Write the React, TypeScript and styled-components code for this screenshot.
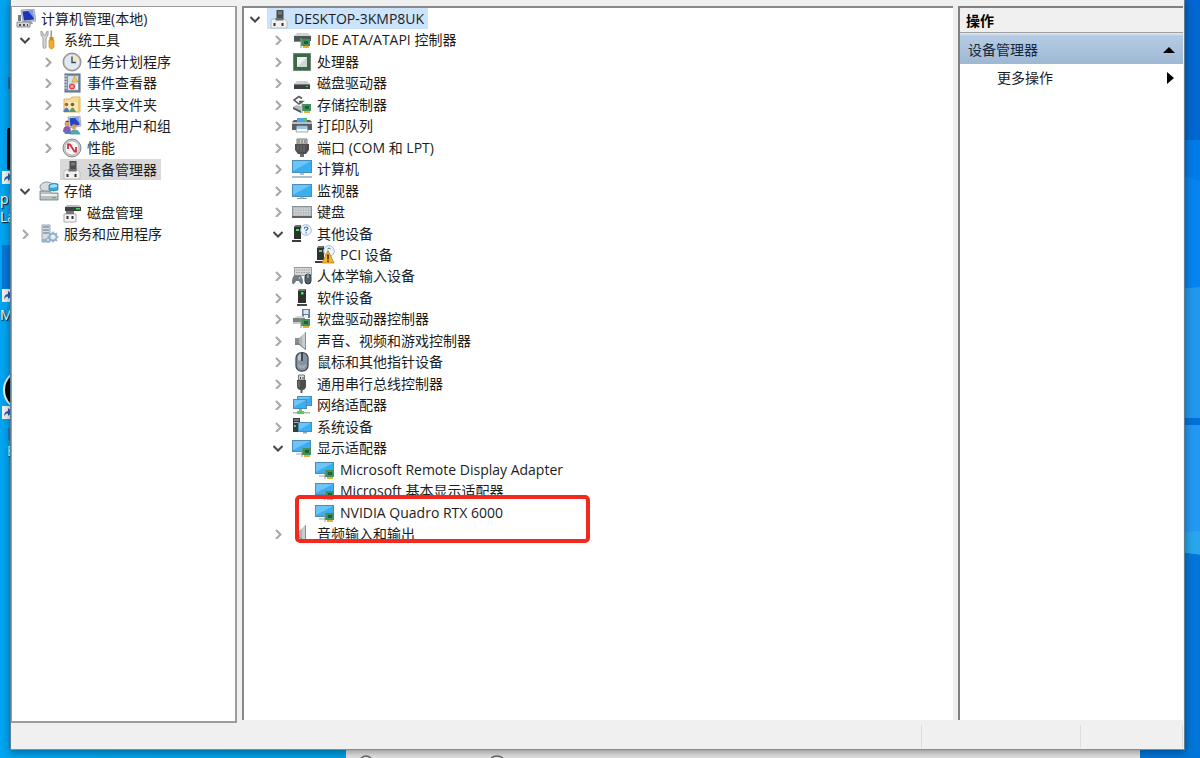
import React from 'react';
import styled, { createGlobalStyle, css } from 'styled-components';

const GlobalStyle = createGlobalStyle`
  * { box-sizing: border-box; }
  html, body { margin: 0; padding: 0; }
  body {
    font-family: 'Open Sans', 'Noto Sans CJK SC', sans-serif;
    font-size: 14px;
    line-height: 20px;
    color: #1c1c1c;
    overflow: hidden;
  }
  button {
    font: inherit;
    color: inherit;
    border: 0;
    padding: 0;
    background: none;
    text-align: left;
  }
`;

/* ---------- desktop ---------- */

const Desktop = styled.div`
  position: relative;
  height: 100vh;
  overflow: hidden;
  background: linear-gradient(90deg, #00a5f2 0%, #009fe4 30%, #0078d7 90%);
`;

const Wallpaper = styled.svg`
  position: absolute;
  top: 0;
  right: 0;
  width: 60px;
  height: 100%;
`;

const Shortcuts = styled.svg`
  position: absolute;
  top: 0;
  left: 0;
  width: 40px;
  height: 480px;
`;

const ShortcutName = styled.span<{ $top: number; $left?: number }>`
  position: absolute;
  top: ${(p) => p.$top}px;
  left: ${(p) => p.$left ?? 0}px;
  color: #fff;
  font-size: 14px;
  text-shadow: 1px 1px 1px #000;
`;

const BackWindow = styled.div`
  position: absolute;
  left: 346px;
  right: 60px;
  bottom: 0;
  height: 40px;
  background: #e4e4e4;
`;

const BackWindowGlyphs = styled.svg`
  position: absolute;
  left: 0;
  bottom: 0;
  width: 200px;
  height: 8px;
`;

/* ---------- window ---------- */

const Window = styled.main`
  position: relative;
  display: flex;
  flex-direction: column;
  height: calc(100vh - 8px);
  margin: 0 15px 0 10px;
  background: #f0f0f0;
  border: 1px solid #5d7f96;
  border-top: 0;
  border-bottom-color: #8a8a8a;
  box-shadow: 0 2px 8px rgba(0, 0, 0, 0.4);
`;

const Panes = styled.div`
  flex: 1;
  min-height: 0;
  display: flex;
  gap: 5px;
  padding: 6px 1px 0 0;
`;

const SidePane = styled.nav`
  flex: none;
  width: 226px;
  padding-top: 1px;
  background: #fff;
  border: 1px solid #9a9ca0;
  border-right-width: 2px;
  border-bottom-width: 2px;
`;

const MainPane = styled.section`
  position: relative;
  flex: 1;
  min-width: 0;
  margin-bottom: 3px;
  background: #fff;
  border: solid #888;
  border-width: 2px 0 0 2px;
`;

const ActionPane = styled.aside`
  flex: none;
  width: 225px;
  margin-bottom: 3px;
  background: #fff;
  border: solid #808080;
  border-width: 2px 0 0 2px;
`;

const ActionTitle = styled.h2`
  margin: 0;
  padding: 3px 6px 2px;
  font-size: 14px;
  line-height: 19px;
  color: #000;
  background: #f0f0f0;
  border-bottom: 1px solid #a0a0a0;
`;

const ActionGroup = styled.button`
  display: flex;
  align-items: center;
  justify-content: space-between;
  width: 100%;
  height: 31px;
  padding: 2px 8px 0;
  color: #16283c;
  background: linear-gradient(#e4ebf3 0, #b4cbe3 3px, #9fb8d3 100%);
`;

const ActionItem = styled.button`
  display: flex;
  align-items: center;
  justify-content: space-between;
  width: 100%;
  height: 28px;
  padding: 0 9px 0 37px;
`;

const StatusBar = styled.footer`
  display: flex;
  justify-content: flex-end;
  height: 26px;
  padding: 2px 1px 1px 0;
`;

const StatusCell = styled.div<{ $width: number }>`
  width: ${(p) => p.$width}px;
  border-left: 1px solid #dcdcdc;
`;

/* ---------- tree ---------- */

const TreeList = styled.ul<{ $height: number; $rows: number }>`
  display: grid;
  grid-template-rows: repeat(${(p) => p.$rows}, 1fr);
  height: ${(p) => p.$height}px;
  margin: 0;
  padding: 0;
  list-style: none;
`;

const TreeRow = styled.li<{ $indent: number }>`
  display: flex;
  align-items: center;
  min-height: 0;
  padding-left: ${(p) => p.$indent}px;
`;

const Toggle = styled.button`
  display: flex;
  flex: none;
  align-items: center;
  width: 21px;
  height: 20px;
  padding-left: 4px;
`;

const ToggleSpace = styled.span`
  flex: none;
  width: 21px;
`;

const Label = styled.button<{ $mark?: 'blue' | 'grey' }>`
  display: flex;
  align-items: center;
  gap: 5px;
  height: 21px;
  padding: 0 4px 0 2px;
  white-space: nowrap;
  ${(p) => p.$mark === 'blue' && css`background: #cce4fb;`}
  ${(p) => p.$mark === 'grey' && css`background: #d9d9d9;`}
`;

const IconBox = styled.svg`
  flex: none;
  width: 20px;
  height: 20px;
`;

const Highlight = styled.div`
  position: absolute;
  top: 487px;
  left: 51px;
  width: 295px;
  height: 48px;
  border: 4px solid #f5281e;
  border-radius: 5px;
  pointer-events: none;
`;

/* ---------- icon drawings, 20 x 20 ---------- */

const screen = (x: number, y: number, w: number, h: number) => (
  <>
    <rect x={x} y={y} width={w} height={h} fill="#4a8db9" />
    <rect x={x + 1} y={y + 1} width={w - 2} height={h - 2} fill="#3badf1" />
    <path d={`M${x + 1} ${y + 1}h${w - 2}L${x + 1} ${y + h - 2}z`} fill="#6cc4f8" />
  </>
);

const board = (x: number, y: number) => (
  <>
    <rect x={x} y={y} width="9" height="7" fill="#3d9159" />
    <rect x={x + 3} y={y + 2} width="4" height="3" fill="#1f5f39" />
    <path d={`M${x} ${y - 1}v10`} stroke="#8d9a94" strokeWidth="1" />
    <rect x={x + 2} y={y + 7} width="6" height="2" fill="#e8ae3a" />
  </>
);

const tower = (
  <>
    <path d="M2 3l2-2h5v14H2z" fill="#2f3330" />
    <path d="M2 3l2-2h5l-1 2z" fill="#6c706d" />
    <rect x="4" y="5" width="3" height="2" fill="#46e05a" />
    <path d="M0 16h9v2H0z" fill="#3a3d3b" />
  </>
);

const speaker = (
  <>
    <path d="M3 7h4v7H3z" fill="#8a8d8f" />
    <path d="M7 7l7-6v18l-7-5z" fill="#aeb2b5" />
    <path d="M10 4.500l4-3.500v18l-4-3z" fill="#c8ccce" />
    <path d="M13.500 1v18" stroke="#8d9193" />
    <path d="M3 13h4l6 5" fill="none" stroke="#6c6f71" strokeWidth="0.800" />
  </>
);

const device = (
  <>
    <path d="M3 10h13l2 2v7H2v-7z" fill="#f1f1f1" stroke="#b4b4b4" strokeWidth="0.800" />
    <path d="M4.500 14h2v3h-2zM12.500 14h2v3h-2z" fill="#333" />
    <path d="M7.500 1h7v9h-7z" fill="#4b4d4f" />
    <path d="M9 2.500h4v3H9z" fill="#77797b" />
    <path d="M6.500 9h8v2.500h-8z" fill="#6c6e70" />
  </>
);

const adapter = (
  <>
    {screen(0, 2, 19, 12)}
    <path d="M4 16h6" stroke="#9aa6ae" />
    {board(10, 10)}
  </>
);

const icons: Record<string, React.ReactNode> = {
  management: (
    <>
      <path d="M5 1l13-1 2 12-13 1z" fill="#c6cad3" stroke="#8c91a0" strokeWidth="0.700" />
      <path d="M6.500 2.500l10-1 1.500 9-10 1z" fill="#1b34b8" />
      <path d="M12 1.800l4.500-.3 1.500 8z" fill="#7b9df0" />
      <path d="M9 12l6-1 2 4-8 1z" fill="#a8a9ab" />
      <path d="M1 13h13v5H1z" fill="#d2d2d4" stroke="#77797d" strokeWidth="0.800" />
      <path d="M3 15h2v2H3zM7 15h2v2H7zM11 15h1v2h-1z" fill="#4c4e54" />
      <path d="M2 6h3v6H2z" fill="#777b84" />
    </>
  ),
  tools: (
    <>
      <path d="M2 1v4l2 3v9.500q1.500 2 3 0V8l2-3V1L7 2.500V5H4V2.500z" fill="#d7d9db" stroke="#85898d" strokeWidth="0.800" />
      <path d="M11.500 0.500h1.500v7h-1.500z" fill="#9a9a9a" />
      <path d="M10.500 7h4v3h-4z" fill="#cf8a15" />
      <path d="M10 10h5v7q-2.500 4-5 0z" fill="#f4ab2c" stroke="#c9830f" strokeWidth="0.600" />
    </>
  ),
  clock: (
    <>
      <circle cx="10" cy="10" r="9" fill="#b3b6b9" stroke="#87898c" />
      <circle cx="10" cy="10" r="7" fill="#dfe9f4" stroke="#f2f2f2" />
      <path d="M10 3a7 7 0 0 1 7 7h-7z" fill="#f6e7bc" />
      <path d="M10 4.500V10.500h4" fill="none" stroke="#3c4c66" strokeWidth="1.400" />
    </>
  ),
  events: (
    <>
      <rect x="3" y="1" width="15" height="18" fill="#8092ad" stroke="#52657f" />
      <path d="M6 3h10v14H6z" fill="#d6dfeb" />
      <path d="M2 3h3M2 6h3M2 9h3M2 12h3M2 15h3" stroke="#e9eaec" />
      <path d="M12.500 3l3.500 6h-6z" fill="#f5cf3a" stroke="#ad8a13" strokeWidth="0.500" />
      <circle cx="10" cy="13.500" r="3" fill="#db4b4b" />
      <path d="M8.800 12.300l2.400 2.400m0-2.400l-2.400 2.400" stroke="#fff" />
      <path d="M14 11h2v5h-2z" fill="#fff" />
    </>
  ),
  shared: (
    <>
      <path d="M2 4h6l2-2h8v15H2z" fill="#f5dc94" stroke="#d6b768" />
      <path d="M3 7h14v9H3z" fill="#fae9b4" />
      <circle cx="4.500" cy="9.500" r="1.800" fill="#a4663c" />
      <path d="M1.500 16q3-7 6 0v1h-6z" fill="#4d7bc7" />
      <circle cx="10.500" cy="9.500" r="1.800" fill="#87543a" />
      <path d="M7.500 16q3-7 6 0v1h-6z" fill="#5a9e58" />
      <path d="M17 4v13" stroke="#e9c76e" strokeWidth="2" />
    </>
  ),
  users: (
    <>
      <path d="M6 1l12-1 1 10-12 2z" fill="#cdd1d8" stroke="#878c97" strokeWidth="0.600" />
      <path d="M7.500 2.300l9.300-.8.800 7.500-9 1.300z" fill="#2444c8" />
      <path d="M13 2l3.800-.4.800 6z" fill="#7ea6f2" />
      <circle cx="5" cy="8" r="2.500" fill="#dba069" />
      <path d="M3 6q2-3 4.500 0z" fill="#6b3d1d" />
      <path d="M1 16q0-6 4-6t4 6z" fill="#8a5bb0" />
      <circle cx="12" cy="11" r="2.400" fill="#dba069" />
      <path d="M10 9.500q2-3 4.500 0z" fill="#bf8b2b" />
      <path d="M8 18.500q0-5 4.500-5t6 5z" fill="#55a8a6" />
      <path d="M2 16h7v2H3z" fill="#4c7fc3" />
    </>
  ),
  performance: (
    <>
      <circle cx="10" cy="10" r="9" fill="#c9cbcd" stroke="#858789" />
      <circle cx="10" cy="10" r="7" fill="#fbfbfb" stroke="#9b9d9f" strokeWidth="0.600" />
      <path d="M6 11V6.500h2l4.500 7H14V9" fill="none" stroke="#d12e3b" strokeWidth="1.800" />
    </>
  ),
  device,
  storage: (
    <>
      <ellipse cx="8" cy="6" rx="7" ry="5" fill="#d5dbde" stroke="#8a949a" />
      <path d="M10 4q4-3 9-1v6q-4 2-9 0z" fill="#3aa6dd" stroke="#1f7cb0" strokeWidth="0.700" />
      <path d="M11 4.500q4-2 7-.5v2q-4 1-7 .5z" fill="#a3ddf8" />
      <path d="M1 10h9l2 2h7v7H1z" fill="#b9c0c4" stroke="#737c81" strokeWidth="0.800" />
      <path d="M2 13h16v2H2z" fill="#edf0f1" />
      <path d="M13 16h4v1.500h-4z" fill="#4ccc3e" />
    </>
  ),
  diskMgmt: (
    <>
      <path d="M3 4l2-2h12l2 2z" fill="#b9bcbe" />
      <path d="M3 4h16v4H3z" fill="#3c4240" />
      <path d="M14 5h4v1.500h-4z" fill="#45d557" />
      <path d="M2 11h12v8H2z" fill="#f6f6f6" stroke="#ababab" />
      <path d="M4 8h8v3H4z" fill="#777" />
      <path d="M4.500 13h2v3h-2zM9.500 13h2v3h-2z" fill="#333" />
    </>
  ),
  services: (
    <>
      <path d="M3 1h8v17H3z" fill="#d4dde6" stroke="#9aa7b4" />
      <path d="M4 3h6M4 6h6M4 9h6" stroke="#5f7184" />
      <path d="M3 15h8v3H3z" fill="#9eb0c1" />
      <circle cx="14" cy="13" r="3.500" fill="#e4eef7" stroke="#8fb0cf" strokeWidth="2" />
      <path d="M14 7.500v2M14 16.500v2M8.500 13h2M17.500 13h2M10 9l1.500 1.500M18 9l-1.500 1.500M18 17l-1.500-1.500" stroke="#8fb0cf" strokeWidth="1.500" />
      <circle cx="9" cy="16" r="2" fill="#c9dced" stroke="#86a5c3" />
    </>
  ),
  ide: (
    <>
      <path d="M2 6l3-3h11l3 3z" fill="#d0d3d4" />
      <path d="M2 6h17v5H2z" fill="#4c5652" />
      <path d="M2 11h8v1H2z" fill="#858a87" />
      {board(9, 9)}
    </>
  ),
  cpu: (
    <>
      <rect x="1.500" y="1.500" width="17" height="17" fill="#3b6849" stroke="#3e5a47" strokeDasharray="1 1" />
      <rect x="2" y="2" width="16" height="16" fill="#3b6849" />
      <rect x="5" y="5" width="10" height="10" fill="#d0d8d2" />
      <path d="M5 15V5h10z" fill="#eef2ee" />
    </>
  ),
  drive: (
    <>
      <path d="M2 11l3-3h10l3 3z" fill="#ccd0d2" />
      <path d="M2 11h16v5H2z" fill="#3c4042" />
      <path d="M2 11h16v1H2z" fill="#777b7d" />
      <rect x="14" y="13" width="2" height="1" fill="#48d458" />
    </>
  ),
  storageCtl: (
    <>
      <path d="M10 3.500L7 1.500 2 5l5 4 3.500-2.500H7" fill="none" stroke="#5a5a5a" strokeWidth="1.600" />
      <path d="M1 12l3-2 5 1v6z" fill="#b7bcbf" />
      <path d="M1 12l8 4v2l-8-4z" fill="#4e5356" />
      {board(10, 9)}
    </>
  ),
  printer: (
    <>
      <path d="M0 6l2-2h16l2 2v8H0z" fill="#5a5f63" />
      <path d="M0 6h20v2H0z" fill="#b8bdc1" />
      <path d="M5 2h10v4H5z" fill="#49a7ea" />
      <path d="M11 2h4v4h-4z" fill="#4bbf7a" />
      <path d="M5 10h10l1 6H4z" fill="#fafafa" stroke="#8d9296" strokeWidth="0.800" />
      <path d="M6 10h8l1 3H5z" fill="#8fc8ee" />
    </>
  ),
  port: (
    <>
      <path d="M5 1h10v5H5z" fill="#d7d7d7" stroke="#777" />
      <path d="M7 2v3M10 2v3M13 2v3" stroke="#555" />
      <path d="M3 6h14v6l-3 4H6l-3-4z" fill="#4f4f4f" />
      <path d="M6 7v5M9 7v7M12 7v7" stroke="#777" />
      <path d="M8 16h4v3H8z" fill="#6a6a6a" />
    </>
  ),
  computer: (
    <>
      {screen(0, 1, 20, 13)}
      <path d="M8 14h4v2H8z" fill="#9fc4dc" />
      <path d="M0 18h20" stroke="#8ea3b1" strokeWidth="1.400" />
    </>
  ),
  monitor: (
    <>
      {screen(0, 3, 20, 13)}
      <path d="M8 16h4v1H8z" fill="#9fc4dc" />
      <path d="M5 17.500h10" stroke="#8ea3b1" />
    </>
  ),
  keyboard: (
    <>
      <rect x="0.500" y="4.500" width="19" height="11" fill="#b9bec2" stroke="#899096" />
      <path d="M2 7h16M2 9.500h16M2 12h16" stroke="#dfe2e4" strokeDasharray="1.500 1" />
      <path d="M0 14h20v2H0z" fill="#5c6267" />
    </>
  ),
  unknown: (
    <>
      {tower}
      <circle cx="14" cy="6" r="5.300" fill="#eef5fb" stroke="#a5bdd0" />
      <path d="M12.300 4.800q0-1.800 1.800-1.800t1.700 1.500q0 1-1.700 1.900v.9M14.100 8.200v1.200" fill="none" stroke="#2c6fb5" strokeWidth="1.200" />
    </>
  ),
  warning: (
    <>
      {tower}
      <circle cx="14" cy="6" r="5.300" fill="#eef5fb" stroke="#a5bdd0" />
      <path d="M12.500 4q1.500-2 3 0" fill="none" stroke="#2c6fb5" />
      <path d="M13 5.500l6 12.500H7z" fill="#f8b42c" stroke="#b97b12" strokeWidth="0.800" strokeLinejoin="round" />
      <path d="M13 9.500v5M13 15.500v1.500" stroke="#2b2008" strokeWidth="1.500" />
    </>
  ),
  hid: (
    <>
      <rect x="2.500" y="1.500" width="17" height="8" fill="#d5d8da" stroke="#969b9f" />
      <path d="M4 4h14M4 6.500h14" stroke="#9ba0a4" strokeDasharray="1.500 1" />
      <path d="M0 17q0-7 3-8 3 1 5 0 3 2 3 8-2 3-4-2H4q-2 5-4 2z" fill="#6e7a84" />
      <circle cx="3.500" cy="11.500" r="1" fill="#e35a4d" />
      <circle cx="7.500" cy="12" r="1" fill="#86d1ef" />
      <rect x="13" y="8" width="6" height="10" rx="3" fill="#56616b" stroke="#343d45" />
      <path d="M16 8v4" stroke="#b3c1cc" />
    </>
  ),
  software: (
    <>
      <path d="M6 3l1-2h7v14H6z" fill="#2e322f" />
      <path d="M6 3l1-2h7l-1 2z" fill="#777b78" />
      <rect x="9" y="4" width="2.500" height="2.500" fill="#49e559" />
      <path d="M5 16h10v2H5z" fill="#454946" />
    </>
  ),
  floppy: (
    <>
      <rect x="10" y="0" width="8" height="9" fill="#5f7f92" />
      <rect x="11.500" y="1" width="5" height="4" fill="#d6e6ef" />
      <rect x="12" y="6" width="4" height="3" fill="#f1f1f1" />
      <path d="M2 9l3-2h6l2 2z" fill="#d2d5d6" />
      <path d="M1 9h12v4H1z" fill="#7c8481" />
      <path d="M1 13h8v2H1z" fill="#c6cac8" />
      {board(9, 10)}
    </>
  ),
  speaker,
  mouse: (
    <>
      <rect x="4" y="0.700" width="12" height="18.500" rx="5.500" fill="#8794a0" stroke="#3f484f" strokeWidth="1.300" />
      <path d="M6 4q1-2.500 3-2.500v7H6z" fill="#b8c4ce" />
      <path d="M10 1v8" stroke="#262c31" strokeWidth="1.500" />
      <path d="M6 12q4 3 8 0v2q-4 5-8 0z" fill="#9fadb8" />
    </>
  ),
  usb: (
    <>
      <path d="M6.500 1h6v5h-6z" fill="#d9d9d9" stroke="#777" />
      <path d="M8 3h1v2H8zM10.500 3h1v2h-1z" fill="#444" />
      <path d="M5 6h9v6q0 3-3 4H8q-3-1-3-4z" fill="#4d4d4d" />
      <path d="M7 7v6" stroke="#888" />
      <path d="M8.500 15h2v4h-2z" fill="#5c5c5c" />
    </>
  ),
  network: (
    <>
      {screen(5, 1, 15, 10)}
      {screen(1, 4, 14, 10)}
      <path d="M7 14h3v2H7z" fill="#83adc4" />
      <path d="M1 17h17v1.500H1z" fill="#9fc3a0" />
      <path d="M5 16h7v3H5z" fill="#5acb55" />
    </>
  ),
  system: (
    <>
      <path d="M1 1h7v14H1z" fill="#333b43" />
      <path d="M2 3h5M2 5.500h5" stroke="#a8b0b7" />
      <rect x="2" y="8" width="2" height="2" fill="#48d75b" />
      {screen(6, 5, 14, 10)}
      <path d="M11 15h4v1.500h-4z" fill="#8da6b6" />
    </>
  ),
  adapter,
};

const Chevron = ({ open }: { open: boolean }) => (
  <svg width="10" height="10" viewBox="0 0 10 10" fill="none" aria-hidden="true">
    {open ? (
      <path d="M0.500 3L5 7.500 9.500 3" stroke="#484848" strokeWidth="2" />
    ) : (
      <path d="M3 1l4.500 4.500L3 10" stroke="#a6a6a6" strokeWidth="2" />
    )}
  </svg>
);

/* ---------- data ---------- */

type Node = {
  text: string;
  icon: string;
  level: number;
  state?: 'open' | 'closed';
  mark?: 'blue' | 'grey';
};

const consoleTree: Node[] = [
  { text: '计算机管理(本地)', icon: 'management', level: 0 },
  { text: '系统工具', icon: 'tools', level: 1, state: 'open' },
  { text: '任务计划程序', icon: 'clock', level: 2, state: 'closed' },
  { text: '事件查看器', icon: 'events', level: 2, state: 'closed' },
  { text: '共享文件夹', icon: 'shared', level: 2, state: 'closed' },
  { text: '本地用户和组', icon: 'users', level: 2, state: 'closed' },
  { text: '性能', icon: 'performance', level: 2, state: 'closed' },
  { text: '设备管理器', icon: 'device', level: 2, mark: 'grey' },
  { text: '存储', icon: 'storage', level: 1, state: 'open' },
  { text: '磁盘管理', icon: 'diskMgmt', level: 2 },
  { text: '服务和应用程序', icon: 'services', level: 1, state: 'closed' },
];

const deviceTree: Node[] = [
  { text: 'DESKTOP-3KMP8UK', icon: 'device', level: 1, state: 'open', mark: 'blue' },
  { text: 'IDE ATA/ATAPI 控制器', icon: 'ide', level: 2, state: 'closed' },
  { text: '处理器', icon: 'cpu', level: 2, state: 'closed' },
  { text: '磁盘驱动器', icon: 'drive', level: 2, state: 'closed' },
  { text: '存储控制器', icon: 'storageCtl', level: 2, state: 'closed' },
  { text: '打印队列', icon: 'printer', level: 2, state: 'closed' },
  { text: '端口 (COM 和 LPT)', icon: 'port', level: 2, state: 'closed' },
  { text: '计算机', icon: 'computer', level: 2, state: 'closed' },
  { text: '监视器', icon: 'monitor', level: 2, state: 'closed' },
  { text: '键盘', icon: 'keyboard', level: 2, state: 'closed' },
  { text: '其他设备', icon: 'unknown', level: 2, state: 'open' },
  { text: 'PCI 设备', icon: 'warning', level: 3 },
  { text: '人体学输入设备', icon: 'hid', level: 2, state: 'closed' },
  { text: '软件设备', icon: 'software', level: 2, state: 'closed' },
  { text: '软盘驱动器控制器', icon: 'floppy', level: 2, state: 'closed' },
  { text: '声音、视频和游戏控制器', icon: 'speaker', level: 2, state: 'closed' },
  { text: '鼠标和其他指针设备', icon: 'mouse', level: 2, state: 'closed' },
  { text: '通用串行总线控制器', icon: 'usb', level: 2, state: 'closed' },
  { text: '网络适配器', icon: 'network', level: 2, state: 'closed' },
  { text: '系统设备', icon: 'system', level: 2, state: 'closed' },
  { text: '显示适配器', icon: 'adapter', level: 2, state: 'open' },
  { text: 'Microsoft Remote Display Adapter', icon: 'adapter', level: 3 },
  { text: 'Microsoft 基本显示适配器', icon: 'adapter', level: 3 },
  { text: 'NVIDIA Quadro RTX 6000', icon: 'adapter', level: 3 },
  { text: '音频输入和输出', icon: 'speaker', level: 2, state: 'closed' },
];

const INDENT = 23;

function Tree({ nodes, height, inset }: { nodes: Node[]; height: number; inset: number }) {
  return (
    <TreeList $height={height} $rows={nodes.length}>
      {nodes.map((n) => (
        <TreeRow key={n.text} $indent={n.level ? inset + (n.level - 1) * INDENT : 2}>
          {n.state ? (
            <Toggle
              type="button"
              aria-expanded={n.state === 'open'}
              aria-label={n.state === 'open' ? '折叠' : '展开'}
            >
              <Chevron open={n.state === 'open'} />
            </Toggle>
          ) : (
            n.level > 0 && <ToggleSpace />
          )}
          <Label type="button" $mark={n.mark}>
            <IconBox viewBox="0 0 20 20" aria-hidden="true">
              {icons[n.icon]}
            </IconBox>
            {n.text}
          </Label>
        </TreeRow>
      ))}
    </TreeList>
  );
}

const ShortcutArrow = ({ y }: { y: number }) => (
  <g transform={`translate(2 ${y})`}>
    <rect width="13" height="13" fill="#f2f2f2" />
    <path d="M2 11q0-6 4-6V2l5 4-5 4V7.500Q3 7.500 2 11z" fill="#2a61ae" />
  </g>
);

export default function App() {
  return (
    <>
      <GlobalStyle />
      <Desktop>
        <Wallpaper viewBox="0 0 60 758" preserveAspectRatio="none" aria-hidden="true">
          <rect width="60" height="758" fill="#0067d0" />
          <rect y="140" width="60" height="150" fill="#007be8" />
          <path d="M0 165l60 16v109H0z" fill="#0684ee" />
          <path d="M0 292l60-5v132H0z" fill="#2098ee" />
          <rect y="418" width="60" height="7" fill="#0071da" />
          <path d="M0 425h60v107l-60 6z" fill="#2298f2" />
          <path d="M0 537l60-6v24l-60-8z" fill="#28a6ec" />
          <path d="M0 547l60 8v203H0z" fill="#0076d9" />
        </Wallpaper>
        <Shortcuts viewBox="0 0 40 480" aria-hidden="true">
          <rect x="7" y="128" width="30" height="42" rx="2" fill="#080808" />
          <ShortcutArrow y={171} />
          <rect x="2" y="245" width="38" height="44" fill="#0878da" />
          <ShortcutArrow y={289} />
          <circle cx="24" cy="390" r="20" fill="#080808" stroke="#eee" strokeWidth="2" />
          <ShortcutArrow y={406} />
          <path d="M9 428v12" stroke="#3376b5" strokeWidth="2" />
          <path d="M9 77v12" stroke="#2a6b9a" strokeWidth="2" />
        </Shortcuts>
        <ShortcutName $top={189}>pi</ShortcutName>
        <ShortcutName $top={207}>La</ShortcutName>
        <ShortcutName $top={305}>M</ShortcutName>
        <ShortcutName $top={441} $left={7}>E</ShortcutName>
        <BackWindow>
          <BackWindowGlyphs viewBox="0 0 200 8" aria-hidden="true">
            <path d="M15 8q5-4 10 0M145 8q6-4 12 0" fill="none" stroke="#666" strokeWidth="1.500" />
          </BackWindowGlyphs>
        </BackWindow>

        <Window>
          <Panes>
            <SidePane aria-label="控制台树">
              <Tree nodes={consoleTree} height={237} inset={4} />
            </SidePane>
            <MainPane aria-label="设备">
              <Tree nodes={deviceTree} height={537} inset={2} />
              <Highlight />
            </MainPane>
            <ActionPane aria-label="操作">
              <ActionTitle>操作</ActionTitle>
              <ActionGroup type="button">
                设备管理器
                <svg width="12" height="6" viewBox="0 0 12 6" aria-hidden="true">
                  <path d="M0 6l6-6 6 6z" fill="#000" />
                </svg>
              </ActionGroup>
              <ActionItem type="button">
                更多操作
                <svg width="7" height="12" viewBox="0 0 7 12" aria-hidden="true">
                  <path d="M0 0l7 6-7 6z" fill="#000" />
                </svg>
              </ActionItem>
            </ActionPane>
          </Panes>
          <StatusBar>
            <StatusCell $width={159} />
            <StatusCell $width={102} />
            <StatusCell $width={1} />
          </StatusBar>
        </Window>
      </Desktop>
    </>
  );
}
